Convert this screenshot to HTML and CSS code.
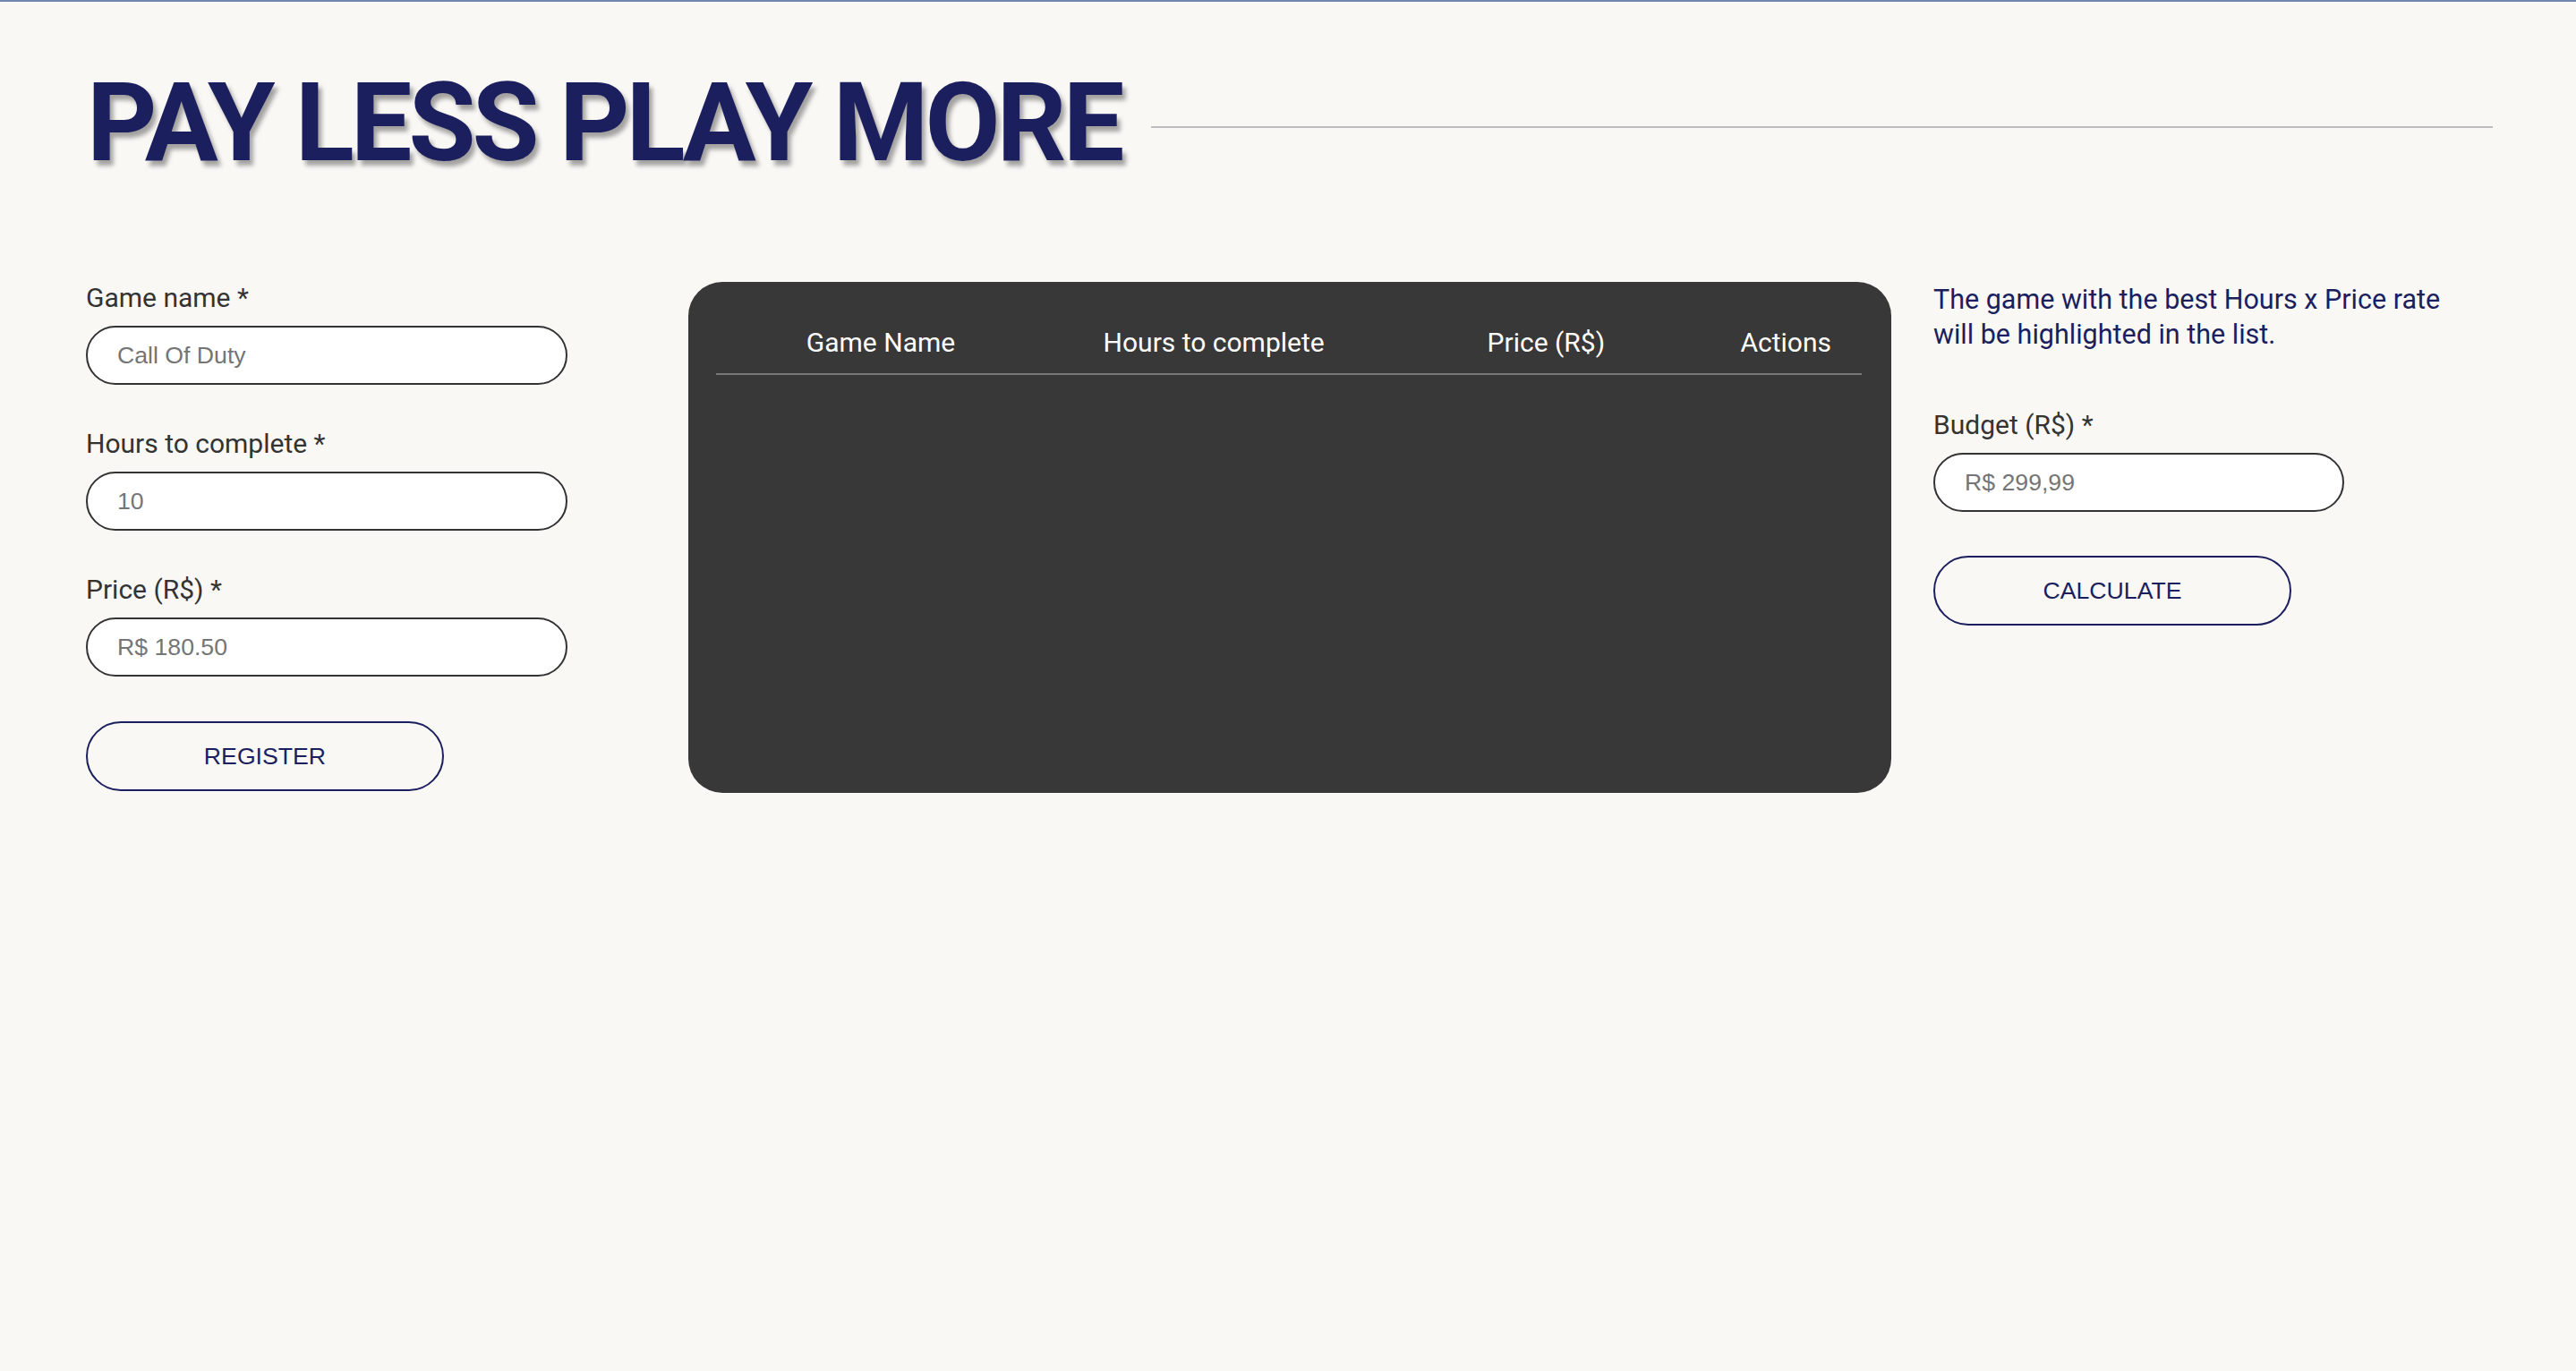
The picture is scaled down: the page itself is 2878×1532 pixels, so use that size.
FILE: index.html
```html
<!DOCTYPE html>
<html lang="en">
<head>
<meta charset="utf-8">
<title>Pay Less Play More</title>
<link rel="stylesheet" href="styles.css">
</head>
<body>
  <header class="header">
    <h1 class="title">PAY LESS PLAY MORE</h1>
    <div class="rule"></div>
  </header>
  <main class="main">
    <form class="form-left">
      <div class="field">
        <label class="label" for="name">Game name *</label>
        <input class="input" id="name" type="text" placeholder="Call Of Duty">
      </div>
      <div class="field">
        <label class="label" for="hours">Hours to complete *</label>
        <input class="input" id="hours" type="text" placeholder="10">
      </div>
      <div class="field">
        <label class="label" for="price">Price (R$) *</label>
        <input class="input" id="price" type="text" placeholder="R$ 180.50">
      </div>
      <button class="btn btn-register" type="button">REGISTER</button>
    </form>
    <section class="card">
      <table class="games">
        <colgroup>
          <col class="c1"><col class="c2"><col class="c3"><col class="c4">
        </colgroup>
        <thead>
          <tr>
            <th>Game Name</th>
            <th>Hours to complete</th>
            <th>Price (R$)</th>
            <th>Actions</th>
          </tr>
        </thead>
        <tbody></tbody>
      </table>
    </section>
    <aside class="side">
      <p class="note">The game with the best Hours x Price rate will be highlighted in the list.</p>
      <div class="field">
        <label class="label" for="budget">Budget (R$) *</label>
        <input class="input input-budget" id="budget" type="text" placeholder="R$ 299,99">
      </div>
      <button class="btn" type="button">CALCULATE</button>
    </aside>
  </main>
</body>
</html>
```
FILE: styles.css
```css
* { box-sizing: border-box; }

html, body { margin: 0; }

body {
  background: #f9f8f5;
  border-top: 2px solid #7088b0;
  font-family: Roboto, "Liberation Sans", sans-serif;
  color: #333;
  min-height: 1532px;
}

.header {
  display: flex;
  align-items: center;
  gap: 34px;
  padding: 0 93px 0 97px;
  margin-top: 64px;
}

.title {
  margin: 0;
  font-family: Roboto, "Liberation Sans", sans-serif;
  font-weight: 700;
  font-size: 122px;
  line-height: 144px;
  letter-spacing: -4px;
  color: #1b1f5e;
  text-shadow: 4px 6px 5px rgba(0, 0, 0, 0.35);
  white-space: nowrap;
}

.rule {
  flex: 1;
  height: 2px;
  background: #bdbdbd;
  margin-top: 8px;
}

.main {
  display: flex;
  align-items: flex-start;
  padding-left: 96px;
  margin-top: 105px;
}

.form-left {
  width: 538px;
  margin: 0;
  display: flex;
  flex-direction: column;
}

.field {
  display: flex;
  flex-direction: column;
  margin-bottom: 48px;
}

.label {
  font-size: 30px;
  line-height: 36px;
  color: #333;
  margin-bottom: 13px;
}

.input {
  height: 66px;
  width: 100%;
  border: 2px solid #333;
  border-radius: 33px;
  background: #fff;
  padding: 0 0 0 33px;
  font-family: "Liberation Sans", Arial, sans-serif;
  font-size: 26.67px;
  color: #333;
  outline: none;
}

.input::placeholder { color: #757575; }

.input-budget { width: 459px; }

.btn {
  width: 400px;
  height: 78px;
  border: 2px solid #1b1f5e;
  border-radius: 39px;
  background: transparent;
  color: #1b1f5e;
  font-family: "Liberation Sans", Arial, sans-serif;
  font-size: 26.67px;
  padding: 0;
  margin-top: -1px;
}

.btn-register { margin-top: 2px; }

.card {
  margin-left: 135px;
  width: 1344px;
  height: 571px;
  background: #383838;
  border-radius: 38px;
  padding: 32px 33px 0 31px;
}

.games {
  width: 100%;
  border-collapse: collapse;
}

.c1 { width: 28.75%; }
.c2 { width: 29.4%; }
.c3 { width: 28.6%; }
.c4 { width: 13.25%; }

.games th {
  font-weight: 400;
  font-size: 30px;
  line-height: 36px;
  color: #fff;
  text-align: center;
  padding: 18px 0 16px;
  border-bottom: 2px solid #787878;
}

.side {
  margin-left: 47px;
  width: 620px;
  display: flex;
  flex-direction: column;
}

.note {
  margin: 0 0 64px;
  font-size: 30.5px;
  line-height: 39px;
  color: #1b1f5e;
  max-width: 600px;
}

.side .field { margin-bottom: 50px; }
```
